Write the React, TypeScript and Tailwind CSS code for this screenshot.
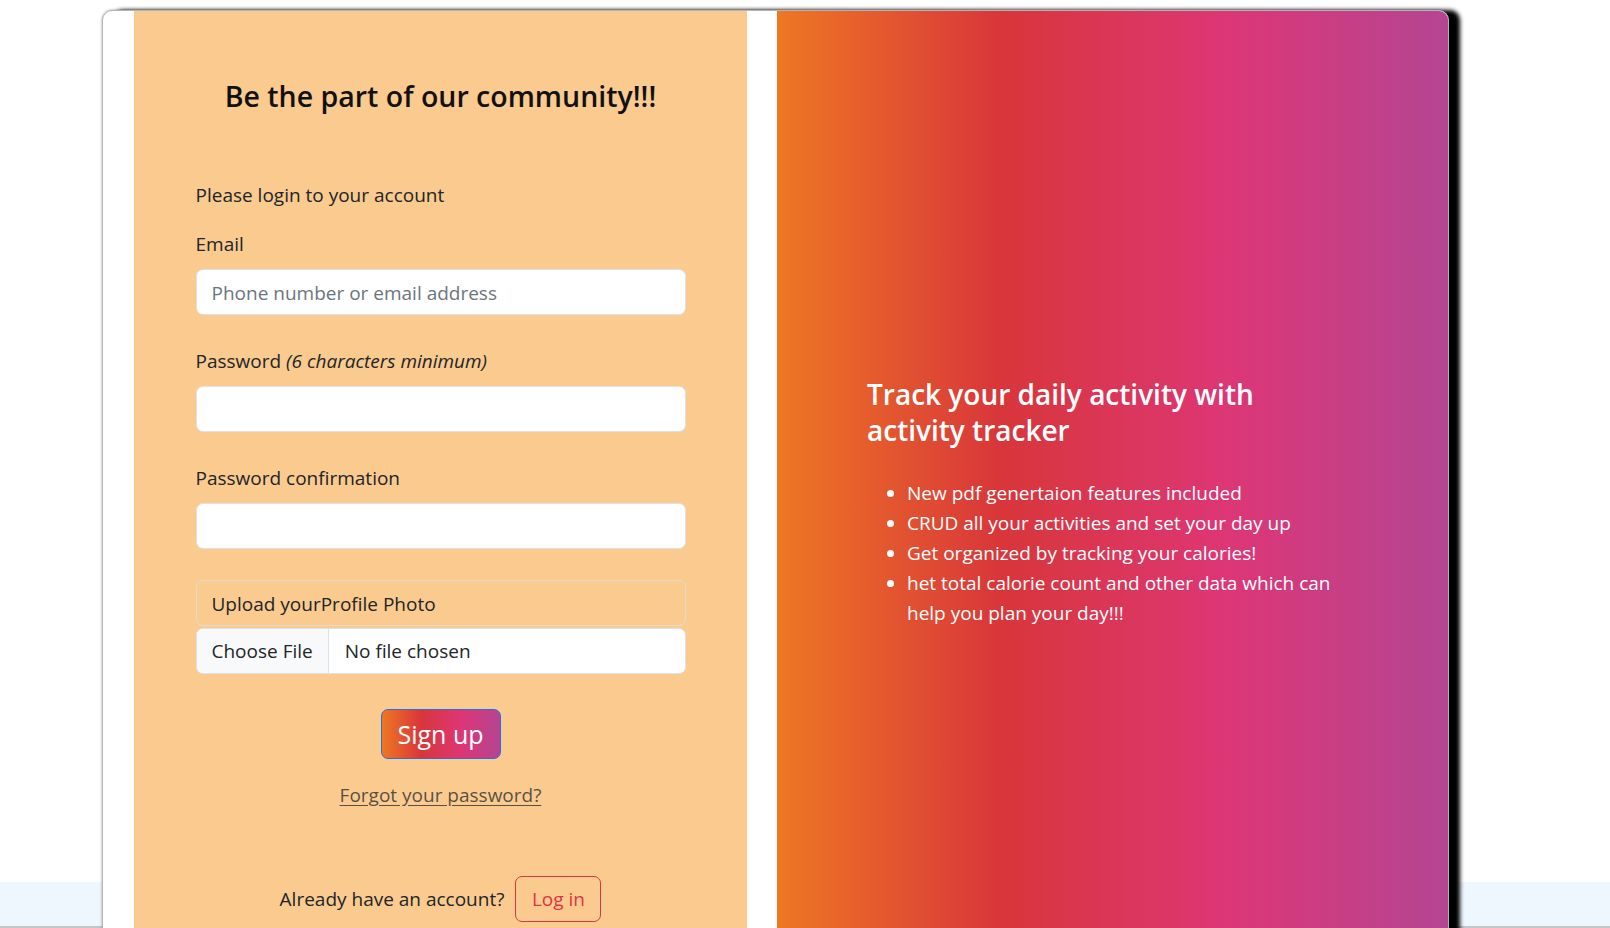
import React from "react";

const FONT = { fontFamily: '"Open Sans", "Noto Sans", sans-serif' };

const FEATURES = [
  "New pdf genertaion features included",
  "CRUD all your activities and set your day up",
  "Get organized by tracking your calories!",
  "het total calorie count and other data which can help you plan your day!!!",
];

function Field({ label, placeholder, type = "text", top }: { label: React.ReactNode; placeholder?: string; type?: string; top: string }) {
  return (
    <div className={top}>
      <label className="mb-[10px] block h-[30px] leading-[30px]">{label}</label>
      <input
        type={type}
        placeholder={placeholder}
        className="block h-[46px] w-full rounded-[7px] border border-[#dee2e6] bg-white px-[15px] pt-[2px] text-[19px] text-[#212529] outline-none placeholder:text-[#6c757d]"
      />
    </div>
  );
}

export default function App() {
  return (
    <div
      style={FONT}
      className="h-[928px] w-[1610px] overflow-hidden bg-[linear-gradient(to_bottom,#ffffff_0px,#ffffff_882px,#eef6fe_882px,#eef6fe_926px,#c4c6c8_926px)] pt-[10px] text-[19px] text-[#212529]"
    >
      <div className="ml-[102px] w-[1347px] overflow-hidden rounded-[10px] border border-[#b4b4b4] bg-white shadow-[11px_0_4px_#000,0_0_3px_rgba(0,0,0,0.35)]">
        <div className="flex pl-[31px]">
          {/* left: sign up form */}
          <div className="w-[613px] bg-[#fbca8f] pb-[71px] pt-[67px]">
            <div className="mx-auto w-[490px]">
              <h4 className="text-center text-[28.5px] font-semibold leading-[36px] text-[#111]">
                Be the part of our community!!!
              </h4>

              <p className="mt-[66px] h-[30px] leading-[30px]">Please login to your account</p>

              <Field top="mt-[19px]" label="Email" placeholder="Phone number or email address" />
              <Field
                top="mt-[31px]"
                type="password"
                label={
                  <>
                    Password <i>(6 characters minimum)</i>
                  </>
                }
              />
              <Field top="mt-[31px]" type="password" label="Password confirmation" />

              <div className="mt-[31px] flex flex-col gap-[2px]">
                <div className="flex h-[46px] items-center rounded-[7px] border border-[#e2dcd0] px-[15px] pt-[2px]">
                  Upload yourProfile Photo
                </div>
                <div className="flex h-[46px] overflow-hidden rounded-[7px] border border-[#dee2e6] bg-white">
                  <span className="flex items-center border-r border-[#dee2e6] bg-[#f8f9fa] px-[15px]">Choose File</span>
                  <span className="flex items-center px-[16px]">No file chosen</span>
                </div>
              </div>

              <div className="mt-[35px] flex flex-col items-center">
                <button className="h-[50px] w-[120px] rounded-[7px] border border-[#2a6ee6] bg-[linear-gradient(to_right,#ee7724,#d8363a,#dd3675,#b44593)] text-[25px] leading-none text-white">
                  Sign up
                </button>
                <a href="#" className="mt-[21px] leading-[30px] text-[rgba(33,37,41,0.75)] underline underline-offset-[3px]">
                  Forgot your password?
                </a>
              </div>

              <div className="mt-[66px] flex items-center justify-center gap-[11px]">
                <span>Already have an account?</span>
                <button className="h-[46px] w-[86px] rounded-[7px] border border-[#dc3545] text-[#dc3545]">Log in</button>
              </div>
            </div>
          </div>

          {/* right: promo */}
          <div className="ml-[30px] flex flex-1 items-center bg-[linear-gradient(to_right,#ee7724,#d8363a,#dd3675,#b44593)] px-[90px] text-white">
            <div>
              <h4 className="mb-[30px] text-[28px] font-semibold leading-[36px]">
                Track your daily activity with activity tracker
              </h4>
              <ul className="list-disc pl-[40px] leading-[30px]">
                {FEATURES.map((f) => (
                  <li key={f}>{f}</li>
                ))}
              </ul>
            </div>
          </div>
        </div>
      </div>
    </div>
  );
}
